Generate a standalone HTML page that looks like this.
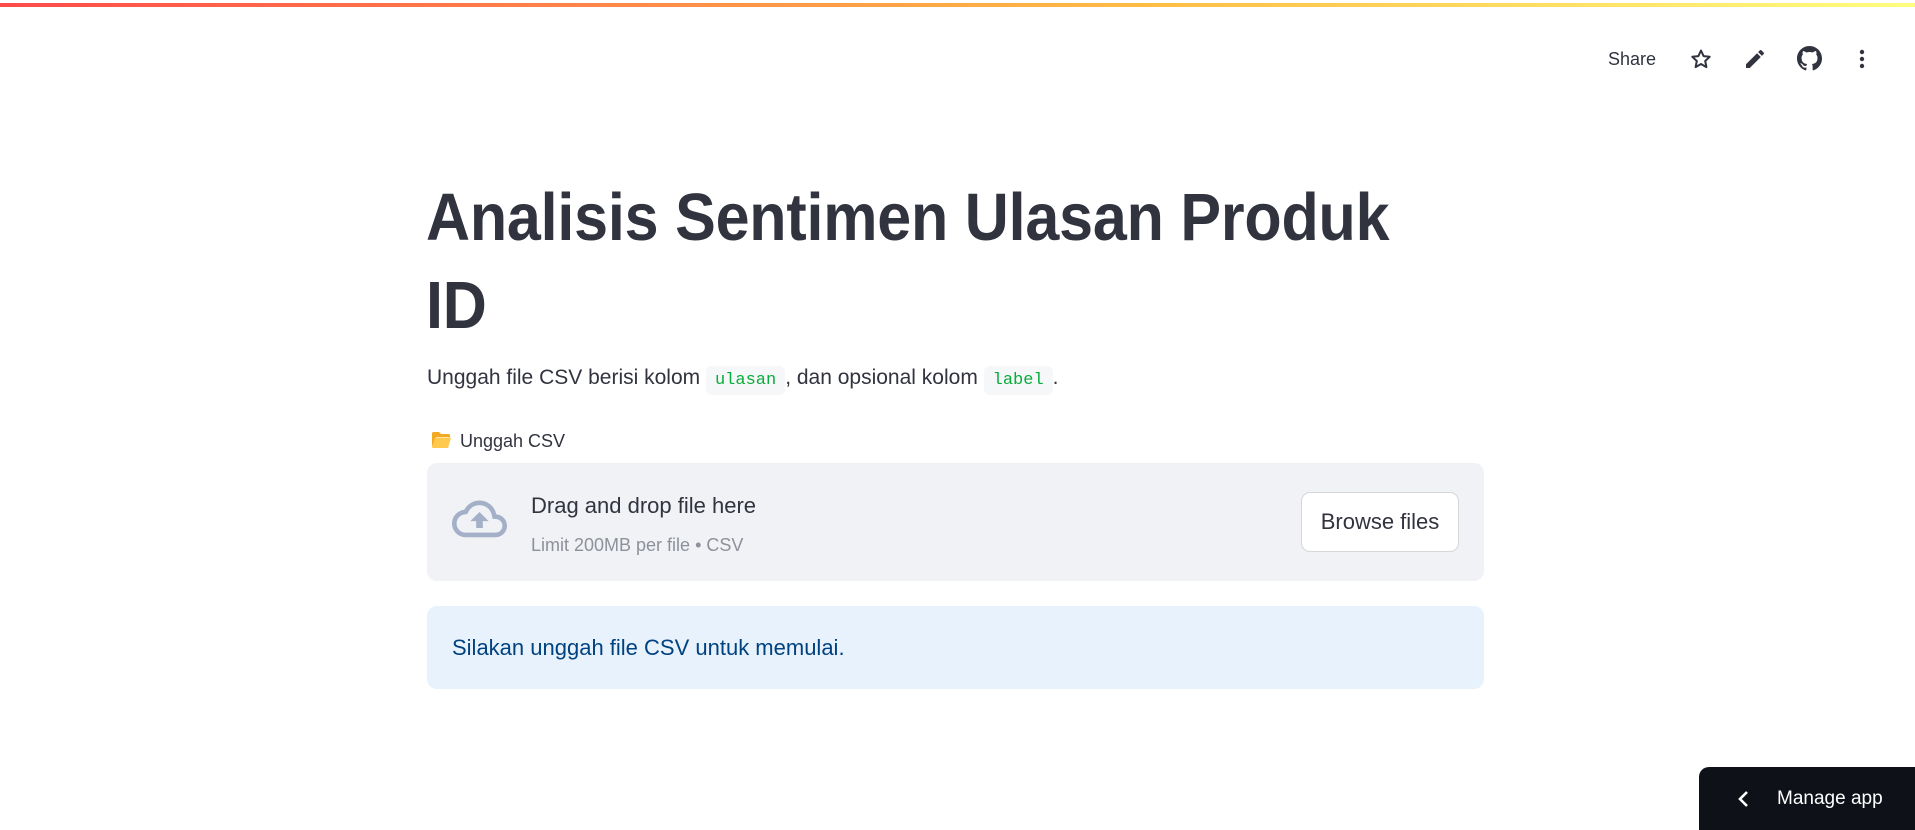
<!DOCTYPE html>
<html><head><meta charset="utf-8"><style>
*{margin:0;padding:0;box-sizing:border-box}
html,body{width:1915px;height:830px;background:#fff;overflow:hidden;font-family:"Liberation Sans",sans-serif;color:#31333f}
.bar{position:absolute;left:0;top:3px;width:1915px;height:4px;background:linear-gradient(90deg,#ff4b4b,#ffbd45 60%,#fffd80)}
.abs{position:absolute}
.hdr{top:47px;font-size:18px;line-height:24px}
h1{position:absolute;left:426px;font-weight:bold;font-size:61px;line-height:61px;letter-spacing:-0.2px;transform:scaleY(1.1);transform-origin:left top;white-space:nowrap}
.p{left:427px;top:363px;font-size:21px;line-height:30px;white-space:nowrap}
code{font-family:"Liberation Mono",monospace;font-size:17px;color:#09ab3b;background:#f6f7f9;border-radius:6px;padding:5px 9px}
.up{left:427px;top:463px;width:1057px;height:118px;background:#f0f2f6;border-radius:10px}
.btn{left:1301px;top:492px;width:158px;height:60px;background:#fff;border:1px solid #d6d6d9;border-radius:9px;font-size:22px;line-height:58px;text-align:center}
.info{left:427px;top:606px;width:1057px;height:83px;background:#e8f2fc;border-radius:10px;color:#004280;font-size:22px;line-height:83px;padding-left:25px}
.mg{left:1699px;top:767px;width:216px;height:63px;background:#0e1117;border-top-left-radius:10px;color:#fff;font-size:19px}
</style></head><body>
<div class="bar"></div>
<div class="abs hdr" style="left:1608px">Share</div>
<svg class="abs" style="left:1689px;top:47px" width="24" height="24" viewBox="0 0 24 24"><path d="M12 3.5l2.6 5.6 6.1.7-4.5 4.2 1.2 6.1L12 17l-5.4 3.1 1.2-6.1-4.5-4.2 6.1-.7z" fill="none" stroke="#31333f" stroke-width="2" stroke-linejoin="round"/></svg>
<svg class="abs" style="left:1743px;top:47px" width="24" height="24" viewBox="0 0 24 24"><path d="M3 17.25V21h3.75L17.81 9.94l-3.75-3.75L3 17.25zM20.71 7.04a1 1 0 000-1.41l-2.34-2.34a1 1 0 00-1.41 0l-1.83 1.83 3.75 3.75 1.83-1.830z" fill="#31333f"/></svg>
<svg class="abs" style="left:1797px;top:46px" width="25" height="25" viewBox="0 0 16 16"><path fill="#31333f" d="M8 0C3.58 0 0 3.58 0 8c0 3.540 2.29 6.53 5.47 7.59.4.07.55-.17.55-.38 0-.19-.01-.82-.01-1.49-2.01.37-2.530-.49-2.69-.94-.09-.23-.48-.94-.82-1.13-.28-.15-.68-.52-.01-.53.63-.01 1.08.58 1.23.82.72 1.21 1.87.87 2.33.66.07-.52.28-.87.51-1.07-1.78-.2-3.64-.89-3.64-3.95 0-.87.31-1.59.82-2.15-.08-.2-.36-1.02.08-2.12 0 0 .67-.21 2.2.82.64-.18 1.32-.27 2-.27.68 0 1.36.09 2 .27 1.53-1.04 2.2-.82 2.2-.82.44 1.1.16 1.92.08 2.12.51.56.82 1.27.82 2.15 0 3.07-1.87 3.75-3.65 3.95.29.25.54.73.54 1.48 0 1.07-.01 1.93-.01 2.2 0 .21.15.46.55.38A8.013 8.013 0 0016 8c0-4.42-3.58-8-8-8z"/></svg>
<svg class="abs" style="left:1852px;top:47px" width="20" height="24" viewBox="0 0 20 24"><circle cx="10" cy="5" r="2.2" fill="#31333f"/><circle cx="10" cy="12" r="2.2" fill="#31333f"/><circle cx="10" cy="19" r="2.2" fill="#31333f"/></svg>

<h1 style="top:184px">Analisis Sentimen Ulasan Produk</h1>
<h1 style="top:272px">ID</h1>

<div class="abs p">Unggah file CSV berisi kolom <code>ulasan</code>, dan opsional kolom <code>label</code>.</div>

<svg class="abs" style="left:431px;top:431px" width="21" height="18" viewBox="0 0 21 18"><path d="M1 2.5Q1 1 2.5 1H8l2 2h7.5Q19 3 19 4.5V6H5L1 16z" fill="#f4a925"/><path d="M4 6.5h16L17 17H1z" fill="#ffc94d"/></svg>
<div class="abs" style="left:460px;top:429px;font-size:18px;line-height:24px">Unggah CSV</div>

<div class="abs up"></div>
<svg class="abs" style="left:452px;top:500px" width="55" height="40" viewBox="0 0 24 17"><path d="M19.35 6.04A7.49 7.49 0 0012 0C9.11 0 6.6 1.64 5.35 4.04A5.994 5.994 0 000 10c0 3.31 2.69 6 6 6h13c2.76 0 5-2.24 5-5 0-2.64-2.05-4.78-4.65-4.96zM19 14H6c-2.21 0-4-1.79-4-4 0-2.05 1.53-3.76 3.56-3.970l1.07-.11.5-.95A5.47 5.47 0 0112 2c2.62 0 4.88 1.86 5.39 4.43l.3 1.5 1.53.11A2.98 2.98 0 0122 11c0 1.65-1.35 3-3 3zM8 9h2.55v3h2.9V9H16l-4-4z" fill="#a3b0c8"/></svg>
<div class="abs" style="left:531px;top:493px;font-size:22px;line-height:26px">Drag and drop file here</div>
<div class="abs" style="left:531px;top:534px;font-size:18px;line-height:22px;color:#8e9199">Limit 200MB per file • CSV</div>
<div class="abs btn">Browse files</div>

<div class="abs info">Silakan unggah file CSV untuk memulai.</div>

<div class="abs mg">
<svg class="abs" style="left:38px;top:23px" width="14" height="18" viewBox="0 0 14 18"><path d="M10 2L3 9l7 7" fill="none" stroke="#fff" stroke-width="2.6"/></svg>
<div class="abs" style="left:78px;top:20px;line-height:24px;white-space:nowrap">Manage app</div>
</div>
</body></html>
